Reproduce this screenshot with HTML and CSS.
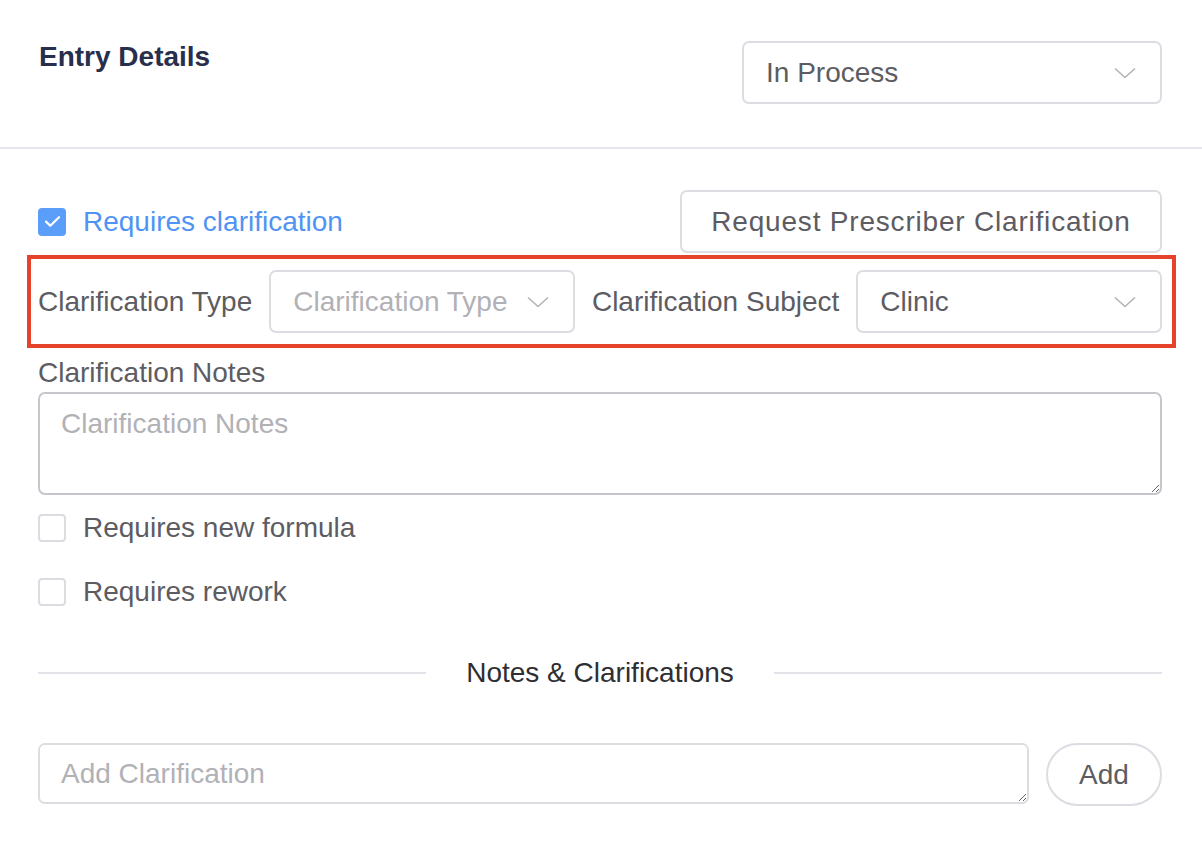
FILE: index.html
```html
<!DOCTYPE html>
<html lang="en">
<head>
<meta charset="utf-8">
<title>Entry Details</title>
<link rel="stylesheet" href="styles.css">
</head>
<body>
<header class="header">
  <h1 class="title">Entry Details</h1>
  <div class="select status-select">
    <span class="select-value">In Process</span>
    <svg class="chevron" width="22" height="12" viewBox="0 0 22 12"><path d="M1 1.5 L11 10.5 L21 1.5" fill="none" stroke="#b4b4b8" stroke-width="1.6"/></svg>
  </div>
</header>

<main class="content">
  <div class="row-between">
    <label class="check checked">
      <span class="box">
        <svg width="17" height="13" viewBox="0 0 17 13"><path d="M2 6.6 L6.3 10.8 L15 2.2" fill="none" stroke="#fff" stroke-width="2.2" stroke-linecap="round" stroke-linejoin="round"/></svg>
      </span>
      <span class="check-label">Requires clarification</span>
    </label>
    <button class="btn">Request Prescriber Clarification</button>
  </div>

  <div class="clar-row">
    <span class="field-label">Clarification Type</span>
    <div class="select grow">
      <span class="select-value placeholder">Clarification Type</span>
      <svg class="chevron" width="22" height="12" viewBox="0 0 22 12"><path d="M1 1.5 L11 10.5 L21 1.5" fill="none" stroke="#b4b4b8" stroke-width="1.6"/></svg>
    </div>
    <span class="field-label">Clarification Subject</span>
    <div class="select grow">
      <span class="select-value">Clinic</span>
      <svg class="chevron" width="22" height="12" viewBox="0 0 22 12"><path d="M1 1.5 L11 10.5 L21 1.5" fill="none" stroke="#b4b4b8" stroke-width="1.6"/></svg>
    </div>
  </div>

  <div class="notes-label">Clarification Notes</div>
  <textarea class="notes" placeholder="Clarification Notes"></textarea>

  <label class="check plain first">
    <span class="box"></span>
    <span class="check-label">Requires new formula</span>
  </label>
  <label class="check plain second">
    <span class="box"></span>
    <span class="check-label">Requires rework</span>
  </label>

  <div class="divider">
    <span class="divider-line"></span>
    <span class="divider-text">Notes &amp; Clarifications</span>
    <span class="divider-line"></span>
  </div>

  <div class="add-row">
    <textarea class="add-input" placeholder="Add Clarification"></textarea>
    <button class="btn pill">Add</button>
  </div>
</main>
</body>
</html>
```

FILE: styles.css
```css
* { box-sizing: border-box; }

html, body {
  margin: 0;
  padding: 0;
  background: #ffffff;
}

body {
  font-family: "Liberation Sans", Arial, Helvetica, sans-serif;
  font-size: 28px;
  line-height: 32px;
  color: #5c5c62;
}

.header {
  display: flex;
  justify-content: space-between;
  align-items: flex-start;
  padding: 41px 40px 43px 39px;
  border-bottom: 2px solid #e6e6ec;
}

.title {
  margin: 0;
  font-size: 28px;
  line-height: 32px;
  font-weight: bold;
  color: #282f4d;
}

.select {
  display: flex;
  align-items: center;
  justify-content: space-between;
  height: 63px;
  padding: 0 24px 0 22px;
  border: 2px solid #dcdde3;
  border-radius: 7px;
  background: #fff;
}

.status-select { width: 420px; }

.select-value {
  color: #5c5c62;
  white-space: nowrap;
  margin-top: 1px;
}

.select-value.placeholder { color: #b1b1b6; }

.chevron { flex: none; margin-top: 1px; }

.content {
  padding: 0 40px 0 38px;
}

.row-between {
  display: flex;
  justify-content: space-between;
  align-items: center;
  margin-top: 41px;
}

.check {
  display: flex;
  align-items: center;
  gap: 17px;
  height: 32px;
}

.box {
  width: 28px;
  height: 28px;
  border-radius: 4px;
  border: 2px solid #dcdde3;
  background: #fff;
  display: flex;
  align-items: center;
  justify-content: center;
  flex: none;
}

.check.checked .box {
  background: #5b9ef9;
  border-color: #5b9ef9;
}

.check.checked .check-label { color: #4f94f4; }

.btn {
  font-family: inherit;
  font-size: 28px;
  line-height: 32px;
  letter-spacing: 0.8px;
  color: #5c5c62;
  background: #fff;
  border: 2px solid #dcdde3;
  border-radius: 7px;
  height: 63px;
  width: 482px;
  padding: 0;
}

.clar-row {
  position: relative;
  display: flex;
  align-items: center;
  gap: 17px;
  margin-top: 17px;
}

.clar-row::after {
  content: "";
  position: absolute;
  left: -11px;
  right: -14px;
  top: -15px;
  bottom: -15px;
  border: 4px solid #e5432c;
  pointer-events: none;
}

.field-label { white-space: nowrap; }

.grow { flex: 1; min-width: 0; }

.notes-label {
  margin-top: 24px;
  margin-bottom: 3px;
}

textarea {
  display: block;
  width: 100%;
  font-family: inherit;
  font-size: 28px;
  line-height: 32px;
  color: #5c5c62;
  border-radius: 7px;
  padding: 14px 21px;
  background: #fff;
  outline: none;
}

textarea::placeholder { color: #b1b1b6; }

.notes {
  height: 103px;
  border: 2px solid #c4c6cc;
}

.check.plain.first { margin-top: 17px; }
.check.plain.second { margin-top: 32px; }

.divider {
  display: flex;
  align-items: center;
  margin-top: 49px;
}

.divider-line {
  flex: 1;
  height: 2px;
  background: #e3e3e9;
}

.divider-text {
  padding: 0 40px;
  color: #2e2e33;
}

.add-row {
  display: flex;
  align-items: flex-start;
  gap: 17px;
  margin-top: 54px;
}

.add-input {
  flex: 1;
  height: 61px;
  border: 2px solid #dcdde3;
  padding: 13px 21px;
}

.btn.pill {
  width: 116px;
  border-radius: 32px;
  letter-spacing: 0;
  flex: none;
}
```
